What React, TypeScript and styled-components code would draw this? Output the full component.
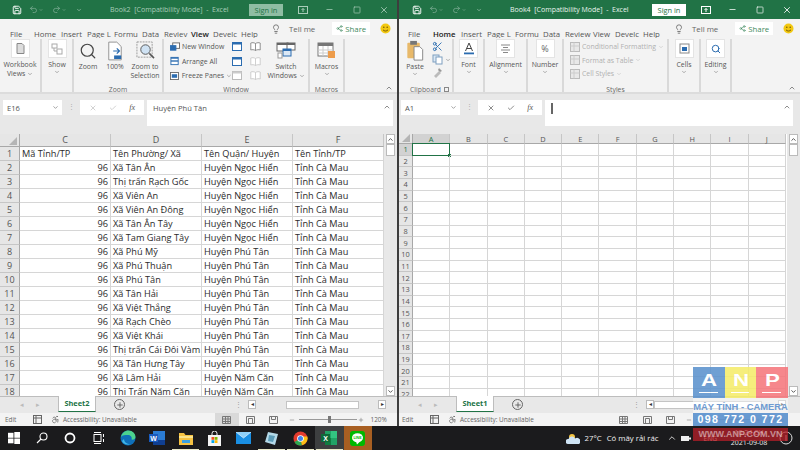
import React from "react";
import styled, { createGlobalStyle } from "styled-components";
import { Accessibility, ChevronDown, ChevronUp, Search, X, Check, Lightbulb, Share2, Scissors, Minus, Plus, Square, Save, Undo2, Redo2 } from "lucide-react";

const GlobalStyle = createGlobalStyle`
  html, body { margin: 0; padding: 0; background: #222; }
  * { box-sizing: border-box; }
  body { font-family: "Open Sans", "Noto Sans", sans-serif; color: #444; }
`;

const Screen = styled.div`
  position: relative;
  width: 800px;
  height: 450px;
  overflow: hidden;
  display: flex;
  flex-direction: column;
`;

const Windows = styled.div`
  height: 426px;
  display: flex;
  gap: 2px;
  background: #3d3d3d;
`;

const ExcelWindow = styled.div<{ $w: number }>`
  width: ${(p) => p.$w}px;
  display: flex;
  flex-direction: column;
  background: #e8e8e8;
  overflow: hidden;
`;

/* title bar */
const TitleBar = styled.div<{ $pad: number }>`
  height: 19px;
  background: #217346;
  display: flex;
  align-items: center;
  padding-left: ${(p) => p.$pad}px;
  color: #fff;
  flex: none;
`;

const Qat = styled.div<{ $w: number }>`
  width: ${(p) => p.$w}px;
  display: flex;
  align-items: center;
  flex: none;
  svg { flex: none; }
`;

const QatGroup = styled.span<{ $ml: number }>`
  display: flex;
  align-items: center;
  gap: 1px;
  margin-left: ${(p) => p.$ml}px;
  color: #7fae95;
`;

const Title = styled.div<{ $dim?: boolean }>`
  font-size: 7px;
  white-space: pre;
  color: ${(p) => (p.$dim ? "#a9cdb9" : "#e9f3ed")};
`;

const SignIn = styled.div<{ $dim?: boolean }>`
  width: 34px;
  height: 12px;
  margin-left: auto;
  background: ${(p) => (p.$dim ? "#8fbda3" : "#ffffff")};
  color: #217346;
  font-size: 7.4px;
  line-height: 12px;
  text-align: center;
`;

const Caption = styled.div<{ $dim?: boolean }>`
  width: 27px;
  height: 19px;
  display: flex;
  align-items: center;
  justify-content: center;
  color: ${(p) => (p.$dim ? "#a9cdb9" : "#ffffff")};
`;

const CaptionRow = styled.div<{ $ml: number }>`
  display: flex;
  margin-left: ${(p) => p.$ml}px;
`;

/* tabs */
const TabRow = styled.div<{ $pad: number }>`
  height: 19px;
  background: #f3f3f3;
  display: flex;
  align-items: center;
  padding-left: ${(p) => p.$pad}px;
  flex: none;
`;

const Tab = styled.div<{ $w: number }>`
  width: ${(p) => p.$w}px;
  flex: none;
  height: 18px;
  white-space: nowrap;
`;

const TabLabel = styled.span<{ $on?: boolean }>`
  position: relative;
  display: inline-block;
  height: 17px;
  font-size: 7.8px;
  line-height: 18px;
  color: ${(p) => (p.$on ? "#222" : "#555")};
  font-weight: ${(p) => (p.$on ? 600 : 400)};
  border-bottom: ${(p) => (p.$on ? "1.5px solid #217346" : "none")};
`;

const TellMe = styled.div<{ $ml: number }>`
  display: flex;
  align-items: center;
  gap: 8px;
  margin-left: ${(p) => p.$ml}px;
  font-size: 7.8px;
  color: #666;
  svg { color: #666; }
`;

const ShareBtn = styled.div`
  width: 38px;
  height: 13px;
  margin-left: 17px;
  background: #fff;
  display: flex;
  align-items: center;
  justify-content: center;
  gap: 2px;
  font-size: 7.8px;
  color: #3f8a60;
`;

const Smiley = styled.svg`
  margin-left: 10px;
  flex: none;
`;

/* ribbon */
const Ribbon = styled.div`
  position: relative;
  height: 56px;
  background: #f3f3f3;
  border-bottom: 2px solid #dcdcdc;
  display: flex;
  padding: 1px 0 0;
  flex: none;
`;

const Group = styled.div<{ $w: number }>`
  width: ${(p) => p.$w}px;
  flex: none;
  display: flex;
  flex-direction: column;
  border-right: 2px solid #d9d9d9;
  height: 53px;
`;

const GroupBody = styled.div<{ $start?: number }>`
  flex: 1;
  display: flex;
  justify-content: ${(p) => (p.$start === undefined ? "center" : "flex-start")};
  padding-left: ${(p) => p.$start ?? 0}px;
  gap: ${(p) => (p.$start === undefined ? 2 : 0)}px;
  min-height: 0;
`;

const GroupName = styled.div`
  position: relative;
  top: 1.5px;
  font-size: 6.8px;
  line-height: 9px;
  text-align: center;
  color: #666;
  height: 9px;
`;

const Launcher = styled.span`
  position: absolute;
  right: 3px;
  top: 2px;
  width: 5px;
  height: 5px;
  border: 1px solid #888;
`;

const Big = styled.div<{ $w: number; $ml?: number }>`
  width: ${(p) => p.$w}px;
  margin-left: ${(p) => p.$ml ?? 0}px;
  flex: none;
  display: flex;
  flex-direction: column;
  align-items: center;
  font-size: 6.9px;
  line-height: 9px;
  text-align: center;
  color: #555;
  white-space: nowrap;
  svg { flex: none; }
`;

const IconBox = styled.div`
  width: 19px;
  height: 19px;
  margin-bottom: 2px;
  background: #fff;
  border: 1px solid #e4e4e4;
  display: flex;
  align-items: center;
  justify-content: center;
  font-size: 9px;
  color: #666;
  flex: none;
`;

const IconSlot = styled.div`
  height: 23px;
  display: flex;
  align-items: center;
  justify-content: center;
  flex: none;
`;

const Caret = styled(ChevronDown)<{ $dim?: boolean }>`
  color: ${(p) => (p.$dim ? "#bbb" : "#666")};
  display: inline-block;
  vertical-align: middle;
`;

const QatCaret = styled(ChevronDown)`
  color: #cfe3d8;
`;

const SmallList = styled.div<{ $gap?: number; $w?: number; $ml?: number }>`
  display: flex;
  flex-direction: column;
  gap: ${(p) => p.$gap ?? 3.5}px;
  padding-top: 2px;
  flex: none;
  width: ${(p) => (p.$w ? `${p.$w}px` : "auto")};
  margin-left: ${(p) => p.$ml ?? 0}px;
`;

const SmallRow = styled.div<{ $dim?: boolean }>`
  display: flex;
  align-items: center;
  gap: 2px;
  font-size: 6.9px;
  line-height: 11px;
  height: 11px;
  white-space: nowrap;
  color: ${(p) => (p.$dim ? "#b0b0b0" : "#555")};
`;

const Collapse = styled(ChevronUp)`
  position: absolute;
  right: 4px;
  bottom: 0;
  color: #555;
`;

/* formula bar */
const FormulaBar = styled.div<{ $l: number; $r: number }>`
  height: 40px;
  padding: 6px ${(p) => p.$r}px 0 ${(p) => p.$l}px;
  display: flex;
  align-items: flex-start;
  background: #e8e8e8;
  flex: none;
`;

const NameBox = styled.div`
  width: 59px;
  height: 15px;
  background: #fff;
  display: flex;
  align-items: center;
  justify-content: space-between;
  padding: 0 3px 0 4px;
  font-size: 7.6px;
  color: #555;
  flex: none;
`;

const Dots = styled.div`
  width: 18px;
  text-align: center;
  font-size: 7px;
  line-height: 14px;
  color: #aaa;
  flex: none;
`;

const FxBox = styled.div<{ $dim?: boolean }>`
  width: 64px;
  height: 15px;
  background: #fff;
  display: flex;
  align-items: center;
  justify-content: space-around;
  padding: 0 3px;
  color: ${(p) => (p.$dim ? "#bbb" : "#555")};
  flex: none;
`;

const Fx = styled.span`
  font-family: "Liberation Serif", serif;
  font-style: italic;
  font-size: 8px;
  color: #555;
`;

const FormulaInput = styled.div`
  flex: 1;
  height: 26px;
  margin-left: 3px;
  background: #fff;
  position: relative;
  padding: 3px 6px;
  font-size: 7.6px;
  color: #555;
`;

const FormulaCaret = styled(ChevronUp)`
  position: absolute;
  right: 2px;
  top: 3px;
  color: #555;
`;

const Cursor = styled.div`
  width: 1.5px;
  height: 11px;
  background: #666;
`;

/* sheet grid */
const SheetArea = styled.div`
  flex: 1;
  min-height: 0;
  display: flex;
  background: #fff;
`;

const Cells = styled.div<{ $cols: string; $rowH: number; $head: number }>`
  flex: 1;
  display: grid;
  grid-template-columns: ${(p) => p.$cols};
  grid-auto-rows: ${(p) => p.$rowH}px;
  grid-template-rows: ${(p) => p.$head}px;
  overflow: hidden;
  align-content: start;
  background: #fff;
`;

const Corner = styled.div`
  background: #e6e6e6;
  border-right: 1px solid #a8a8a8;
  border-bottom: 1px solid #a8a8a8;
  position: relative;
  &::after {
    content: "";
    position: absolute;
    right: 2px;
    bottom: 1px;
    border-style: solid;
    border-width: 0 0 8px 8px;
    border-color: transparent transparent #b5b5b5 transparent;
  }
`;

const ColHead = styled.div<{ $on?: boolean; $size: number }>`
  background: ${(p) => (p.$on ? "#d2d2d2" : "#e6e6e6")};
  border-right: 1px solid #c6c6c6;
  border-bottom: 1px solid ${(p) => (p.$on ? "#217346" : "#a8a8a8")};
  font-size: ${(p) => p.$size}px;
  line-height: 11px;
  text-align: center;
  color: ${(p) => (p.$on ? "#217346" : "#555")};
`;

const RowHead = styled.div<{ $on?: boolean; $size: number }>`
  background: ${(p) => (p.$on ? "#d2d2d2" : "#e6e6e6")};
  border-right: 1px solid ${(p) => (p.$on ? "#217346" : "#a8a8a8")};
  border-bottom: 1px solid #c6c6c6;
  font-size: ${(p) => p.$size}px;
  display: flex;
  align-items: center;
  justify-content: center;
  color: ${(p) => (p.$on ? "#217346" : "#555")};
`;

const Cell = styled.div<{ $num?: boolean; $sel?: boolean }>`
  position: relative;
  border-right: 1px solid #d6d6d6;
  border-bottom: 1px solid #d6d6d6;
  font-size: 9.2px;
  line-height: 13px;
  padding: 0 2px;
  white-space: nowrap;
  overflow: ${(p) => (p.$sel ? "visible" : "hidden")};
  text-align: ${(p) => (p.$num ? "right" : "left")};
  color: #2b2b2b;
`;

const Selection = styled.span`
  position: absolute;
  left: -1px;
  top: -1px;
  right: -1px;
  bottom: -1px;
  border: 1.5px solid #217346;
  &::after {
    content: "";
    position: absolute;
    right: -2px;
    bottom: -2px;
    width: 3px;
    height: 3px;
    background: #217346;
  }
`;

/* scrollbars */
const VScroll = styled.div`
  width: 13px;
  padding: 0 2px;
  background: #e8e8e8;
  display: flex;
  flex-direction: column;
  flex: none;
`;

const ArrowBtn = styled.div`
  height: 10px;
  width: 9px;
  background: #fff;
  border: 1px solid #bbb;
  display: flex;
  align-items: center;
  justify-content: center;
  color: #444;
  flex: none;
`;

const VTrack = styled.div`
  flex: 1;
  background: #e8e8e8;
`;

const VThumb = styled.div`
  width: 9px;
  height: 12px;
  background: #fff;
  border: 1px solid #bbb;
`;

/* sheet tabs row */
const SheetBar = styled.div<{ $pad: number }>`
  height: 17px;
  background: #e8e8e8;
  display: flex;
  align-items: flex-start;
  padding-left: ${(p) => p.$pad}px;
  flex: none;
  font-size: 7.5px;
  border-top: 1px solid #bdbdbd;
`;

const NavArrows = styled.div`
  width: 44px;
  height: 15px;
  display: flex;
  align-items: center;
  justify-content: space-around;
  padding-right: 12px;
  color: #bbb;
  font-size: 7px;
  flex: none;
`;

const SheetTab = styled.div`
  width: 38px;
  height: 16px;
  margin-top: -1px;
  background: #fff;
  border-bottom: 1.5px solid #217346;
  border-left: 1px solid #bdbdbd;
  border-right: 1px solid #bdbdbd;
  color: #217346;
  font-size: 7.4px;
  font-weight: 700;
  text-align: center;
  line-height: 15px;
  flex: none;
`;

const AddSheet = styled.div`
  width: 11px;
  height: 11px;
  margin: 2px 0 0 18px;
  border: 1px solid #666;
  border-radius: 50%;
  color: #555;
  display: flex;
  align-items: center;
  justify-content: center;
  flex: none;
`;

const HScroll = styled.div<{ $w: number }>`
  width: ${(p) => p.$w}px;
  margin-left: 6px;
  height: 9px;
  margin-top: 3px;
  display: flex;
  align-items: center;
  flex: none;
`;

const HThumb = styled.div<{ $w: number; $ml: number }>`
  width: ${(p) => p.$w}px;
  margin-left: ${(p) => p.$ml}px;
  height: 8px;
  background: #fff;
  border: 1px solid #c4c4c4;
  flex: none;
`;

const HFill = styled.div`
  flex: 1;
`;

const ArrowSide = styled.div`
  width: 8px;
  height: 9px;
  background: #fff;
  border: 1px solid #bbb;
  font-size: 6px;
  line-height: 7px;
  text-align: center;
  color: #333;
  flex: none;
`;

const BarDots = styled.div<{ $ml: number }>`
  color: #999;
  font-size: 7px;
  line-height: 15px;
  margin-left: ${(p) => p.$ml}px;
  flex: none;
`;

/* status bar */
const StatusBar = styled.div<{ $pad: number }>`
  flex: none;
  height: 13px;
  background: #f3f3f3;
  display: flex;
  align-items: center;
  padding-left: ${(p) => p.$pad}px;
  font-size: 6.4px;
  color: #666;
  white-space: nowrap;
`;

const StatusMode = styled.span`
  width: 28px;
  flex: none;
`;

const A11y = styled.span`
  display: flex;
  align-items: center;
  gap: 3px;
  margin-left: 9px;
  width: 86px;
  flex: none;
`;

const ViewBtn = styled.div<{ $on?: boolean }>`
  width: 23.5px;
  height: 13px;
  display: flex;
  align-items: center;
  justify-content: center;
  background: ${(p) => (p.$on ? "#d9d9d9" : "transparent")};
  color: #777;
  flex: none;
`;

const ViewGroup = styled.div`
  display: flex;
  margin-left: 78px;
  flex: none;
`;

const ZoomMinus = styled(Minus)`
  margin-left: 3px;
`;

const ZoomSlider = styled.div`
  width: 58px;
  margin: 0 1px 0 4px;
  height: 1px;
  background: #999;
  position: relative;
  flex: none;
`;

const ZoomThumb = styled.span`
  position: absolute;
  left: 29px;
  top: -3px;
  width: 3px;
  height: 7px;
  background: #777;
`;

const ZoomPct = styled.span`
  margin-left: 7px;
`;

/* taskbar */
const Taskbar = styled.div`
  height: 24px;
  background: #1b1b1d;
  display: flex;
  align-items: stretch;
  color: #fff;
  flex: none;
`;

const Slot = styled.div<{ $w?: number; $bg?: string; $run?: boolean }>`
  position: relative;
  width: ${(p) => p.$w ?? 28.7}px;
  flex: none;
  display: flex;
  align-items: center;
  justify-content: center;
  background: ${(p) => p.$bg ?? "transparent"};
  &::after {
    content: "";
    display: ${(p) => (p.$run ? "block" : "none")};
    position: absolute;
    left: 1px;
    right: 1px;
    bottom: 0;
    height: 1.5px;
    background: #e9e9c9;
  }
`;

const Tray = styled.div`
  margin-left: auto;
  display: flex;
  align-items: center;
  font-size: 7.8px;
  color: #f0f0f0;
  padding-right: 7px;
`;

const TrayItem = styled.span<{ $ml: number }>`
  margin-left: ${(p) => p.$ml}px;
  display: flex;
  align-items: center;
  white-space: nowrap;
`;

const Clock = styled.div`
  font-size: 7px;
  line-height: 10px;
  text-align: center;
  width: 44px;
  margin-left: 10px;
  color: #eee;
`;

const Eng = styled.span`
  font-size: 6.6px;
  color: #ddd;
  margin-left: 13px;
`;

/* watermark */
const Watermark = styled.div`
  position: absolute;
  left: 693px;
  top: 367px;
  width: 95px;
  font-family: "Liberation Sans", sans-serif;
  display: flex;
  flex-direction: column;
`;

const Blocks = styled.div`
  display: flex;
  height: 31px;
`;

const Block = styled.div<{ $bg: string }>`
  flex: 1;
  background: ${(p) => p.$bg};
  color: #fff;
  text-align: center;
  position: relative;
  opacity: 0.88;
  &::after {
    content: "";
    position: absolute;
    left: 6px;
    right: 7px;
    bottom: 5px;
    height: 1px;
    background: #fff;
  }
`;

const BlockLetter = styled.span`
  display: inline-block;
  font-weight: 700;
  font-size: 16.5px;
  line-height: 26px;
  transform: scaleX(1.35);
`;

const Tagline = styled.div`
  height: 15px;
  background: rgba(255, 255, 255, 0.45);
  color: #6f9bd1;
  font-size: 9.4px;
  font-weight: 700;
  line-height: 17px;
  text-align: center;
  white-space: nowrap;
`;

const Phone = styled.div`
  height: 13px;
  background: rgba(92, 146, 206, 0.92);
  color: #fff;
  font-size: 10.6px;
  font-weight: 700;
  line-height: 13px;
  letter-spacing: 1.4px;
  text-align: center;
  white-space: nowrap;
`;

const Site = styled.div`
  height: 13px;
  margin-top: 2px;
  background: rgba(190, 30, 40, 0.72);
  color: rgba(255, 255, 255, 0.5);
  font-size: 9px;
  font-weight: 700;
  line-height: 13px;
  text-align: center;
  white-space: nowrap;
`;

const Sheet2Rows: string[][] = [
  ["Xã Tân Ân", "Huyện Ngọc Hiển"],
  ["Thị trấn Rạch Gốc", "Huyện Ngọc Hiển"],
  ["Xã Viên An", "Huyện Ngọc Hiển"],
  ["Xã Viên An Đông", "Huyện Ngọc Hiển"],
  ["Xã Tân Ân Tây", "Huyện Ngọc Hiển"],
  ["Xã Tam Giang Tây", "Huyện Ngọc Hiển"],
  ["Xã Phú Mỹ", "Huyện Phú Tân"],
  ["Xã Phú Thuận", "Huyện Phú Tân"],
  ["Xã Phú Tân", "Huyện Phú Tân"],
  ["Xã Tân Hải", "Huyện Phú Tân"],
  ["Xã Việt Thắng", "Huyện Phú Tân"],
  ["Xã Rạch Chèo", "Huyện Phú Tân"],
  ["Xã Việt Khái", "Huyện Phú Tân"],
  ["Thị trấn Cái Đôi Vàm", "Huyện Phú Tân"],
  ["Xã Tân Hưng Tây", "Huyện Phú Tân"],
  ["Xã Lâm Hải", "Huyện Năm Căn"],
  ["Thị Trấn Năm Căn", "Huyện Năm Căn"],
];

const leftTabs: [string, number][] = [["File", 24], ["Home", 27], ["Insert", 26], ["Page L", 27], ["Formu", 28], ["Data", 22], ["Reviev", 27], ["View", 22], ["Develc", 28], ["Help", 22]];
const rightTabs: [string, number][] = [["File", 25], ["Home", 28], ["Insert", 26], ["Page L", 28], ["Formu", 28], ["Data", 22], ["Review", 28], ["View", 22], ["Develc", 28], ["Help", 22]];

function TitleControls({ dim, name, pad, ml }: { dim?: boolean; name: string; pad: number; ml: number }) {
  return (
    <TitleBar $pad={pad}>
      <Qat $w={98}>
        <Save size={10} strokeWidth={2.2} color="#fff" />
        <QatGroup $ml={7}><Undo2 size={9} /><QatCaret size={4} /></QatGroup>
        <QatGroup $ml={9}><Redo2 size={9} /><QatCaret size={4} /></QatGroup>
        <QatGroup $ml={10}><QatCaret size={6} /></QatGroup>
      </Qat>
      <Title $dim={dim}>{name}  [Compatibility Mode]  -  Excel</Title>
      <SignIn $dim={dim}>Sign in</SignIn>
      <CaptionRow $ml={ml}>
        <Caption $dim={dim}>
          <svg width="10" height="8" viewBox="0 0 10 8" fill="none" stroke="currentColor"><rect x="0.5" y="0.5" width="9" height="7" /><path d="M5 6V2.5M3.5 4L5 2.5 6.5 4" /></svg>
        </Caption>
        <Caption $dim={dim}><Minus size={9} /></Caption>
        <Caption $dim={dim}><Square size={8} /></Caption>
        <Caption $dim={dim}><X size={10} /></Caption>
      </CaptionRow>
    </TitleBar>
  );
}

function Tabs({ active, pad, tabs, bulb }: { active: string; pad: number; tabs: [string, number][]; bulb: number }) {
  return (
    <TabRow $pad={pad}>
      {tabs.map(([t, w]) => (
        <Tab key={t} $w={w}><TabLabel $on={t === active}>{t}</TabLabel></Tab>
      ))}
      <TellMe $ml={bulb}>
        <Lightbulb size={10} />
        Tell me
      </TellMe>
      <ShareBtn>
        <Share2 size={7} />
        Share
      </ShareBtn>
      <Smiley width="11" height="11" viewBox="0 0 11 11">
        <circle cx="5.5" cy="5.5" r="5" fill="#f2c811" />
        <circle cx="3.8" cy="4.2" r="0.8" fill="#7a5c00" />
        <circle cx="7.2" cy="4.2" r="0.8" fill="#7a5c00" />
        <path d="M3 6.8c1.2 1.6 3.8 1.6 5 0" stroke="#7a5c00" fill="none" />
      </Smiley>
    </TabRow>
  );
}

function MiniWin({ dim }: { dim?: boolean }) {
  const fill = "#2b6cb0";
  return (
    <svg width="10" height="11" viewBox="0 0 10 11">
      <rect x="0.5" y="1.5" width="9" height="8" fill="#fff" stroke={dim ? "#bbb" : fill} />
      <rect x="0.5" y="1.5" width="9" height="2" fill={dim ? "#ccc" : fill} />
    </svg>
  );
}

function BookIcon({ dim }: { dim?: boolean }) {
  const c = dim ? "#c4c4c4" : "#777";
  return (
    <svg width="11" height="11" viewBox="0 0 11 10">
      <path d="M5.5 2C4 1 2 1 0.8 1.5v7C2 8 4 8 5.5 9c1.5-1 3.5-1 4.7-0.5v-7C9 1 7 1 5.5 2zM5.5 2v7" fill="#fff" stroke={c} strokeWidth="0.8" />
    </svg>
  );
}

function ViewRibbon() {
  return (
    <Ribbon>
      <Group $w={42}>
        <GroupBody>
          <Big $w={38}>
            <IconBox>
              <svg width="9" height="11" viewBox="0 0 9 11"><path d="M1 0.5h5l2 2v8H1z" fill="#ddd" stroke="#888" /></svg>
            </IconBox>
            Workbook
            <span>Views <Caret size={6} /></span>
          </Big>
        </GroupBody>
        <GroupName />
      </Group>
      <Group $w={32}>
        <GroupBody>
          <Big $w={28}>
            <IconBox>
              <svg width="12" height="12" viewBox="0 0 12 12" fill="#fff" stroke="#aaa"><rect x="1" y="1" width="5" height="4" /><rect x="6" y="6" width="5" height="5" /><path d="M3 5v3h3" fill="none" /></svg>
            </IconBox>
            Show
            <Caret size={6} />
          </Big>
        </GroupBody>
        <GroupName />
      </Group>
      <Group $w={90}>
        <GroupBody>
          <Big $w={26}>
            <IconSlot><Search size={18} strokeWidth={1.6} color="#444" /></IconSlot>
            Zoom
          </Big>
          <Big $w={24}>
            <IconSlot>
              <svg width="16" height="20" viewBox="0 0 18 22">
                <path d="M2 1h9l5 5v15H2z" fill="#fff" stroke="#888" />
                <path d="M7 11h7M11 8l3 3-3 3" stroke="#2b6cb0" fill="none" strokeWidth="1.4" />
                <rect x="8" y="16" width="8" height="4" fill="#2b6cb0" />
              </svg>
            </IconSlot>
            100%
          </Big>
          <Big $w={32}>
            <IconSlot>
              <svg width="19" height="19" viewBox="0 0 20 20">
                <rect x="1" y="1" width="16" height="16" fill="#f3f3f3" stroke="#999" strokeDasharray="2 1" />
                <circle cx="10" cy="9" r="5" fill="#cfe2f3" stroke="#555" />
                <path d="M14 13l5 5" stroke="#555" strokeWidth="1.6" />
              </svg>
            </IconSlot>
            Zoom to
            <br />
            Selection
          </Big>
        </GroupBody>
        <GroupName>Zoom</GroupName>
      </Group>
      <Group $w={146}>
        <GroupBody $start={6}>
          <SmallList $w={62}>
            <SmallRow>
              <svg width="10" height="10" viewBox="0 0 11 10"><rect x="3" y="0.5" width="7.5" height="6" fill="#fff" stroke="#666" /><rect x="0.5" y="3.5" width="6" height="5" fill="#2b6cb0" stroke="#2b6cb0" /></svg>
              New Window
            </SmallRow>
            <SmallRow>
              <svg width="10" height="10" viewBox="0 0 11 10"><rect x="1" y="1" width="8" height="8" fill="#fff" stroke="#2b6cb0" /><path d="M1 5h8" stroke="#2b6cb0" strokeWidth="1.5" /><rect x="1" y="1" width="8" height="1.5" fill="#2b6cb0" /></svg>
              Arrange All
            </SmallRow>
            <SmallRow>
              <svg width="10" height="10" viewBox="0 0 11 10"><rect x="0.5" y="1" width="9" height="8" fill="#fff" stroke="#666" /><rect x="2" y="3" width="6" height="4" fill="#2b6cb0" /></svg>
              Freeze Panes <Caret size={6} />
            </SmallRow>
          </SmallList>
          <SmallList $gap={3.5}>
            <MiniWin />
            <MiniWin />
            <MiniWin dim />
          </SmallList>
          <SmallList $gap={3.5} $ml={8}>
            <BookIcon />
            <BookIcon dim />
            <BookIcon dim />
          </SmallList>
          <Big $w={36} $ml={7}>
            <IconSlot>
              <svg width="20" height="18" viewBox="0 0 20 18">
                <rect x="1" y="1" width="11" height="8" fill="#fff" stroke="#666" /><rect x="1" y="1" width="11" height="2" fill="#666" />
                <rect x="11" y="1" width="8" height="7" fill="#fff" stroke="#666" /><rect x="11" y="1" width="8" height="2" fill="#666" />
                <rect x="7" y="7" width="8" height="7" fill="#dbe8f5" stroke="#2b6cb0" /><rect x="7" y="7" width="8" height="2" fill="#2b6cb0" />
                <rect x="2" y="11" width="4" height="5" fill="#fff" stroke="#999" />
              </svg>
            </IconSlot>
            Switch
            <span>Windows <Caret size={6} /></span>
          </Big>
        </GroupBody>
        <GroupName>Window</GroupName>
      </Group>
      <Group $w={35}>
        <GroupBody>
          <Big $w={30}>
            <IconSlot>
              <svg width="20" height="18" viewBox="0 0 20 18">
                <rect x="1" y="1" width="15" height="13" fill="#fff" stroke="#777" />
                <rect x="1" y="1" width="15" height="3" fill="#777" />
                <path d="M1 8h15M1 11h15M6 4v10M11 4v10" stroke="#ccc" />
                <rect x="11" y="9" width="7" height="7" fill="#ed9c4b" />
              </svg>
            </IconSlot>
            Macros
            <Caret size={6} />
          </Big>
        </GroupBody>
        <GroupName>Macros</GroupName>
      </Group>
      <Collapse size={8} />
    </Ribbon>
  );
}

function HomeRibbon() {
  return (
    <Ribbon>
      <Group $w={55}>
        <GroupBody>
          <Big $w={30}>
            <IconSlot>
              <svg width="18" height="23" viewBox="0 0 18 24">
                <rect x="1" y="4" width="13" height="16" rx="1" fill="#e8b96a" />
                <rect x="4" y="2" width="7" height="4" fill="#777" />
                <path d="M8 8h6l3 3v11H8z" fill="#fff" stroke="#888" />
              </svg>
            </IconSlot>
            Paste
            <Caret size={6} />
          </Big>
          <SmallList $gap={2}>
            <Scissors size={11} color="#2b6cb0" />
            <SmallRow>
              <svg width="11" height="11" viewBox="0 0 11 11"><rect x="1" y="1" width="6" height="7" fill="#dbe8f5" stroke="#7f9fc0" /><rect x="4" y="3" width="6" height="7" fill="#fff" stroke="#7f9fc0" /></svg>
              <Caret size={6} />
            </SmallRow>
            <svg width="11" height="11" viewBox="0 0 11 11"><path d="M2 9l5-5 2 2-5 5z" fill="#bbb" /><path d="M7 1l3 3-2 1-2-2z" fill="#999" /></svg>
          </SmallList>
        </GroupBody>
        <GroupName>Clipboard<Launcher /></GroupName>
      </Group>
      <Group $w={31}>
        <GroupBody>
          <Big $w={28}>
            <IconBox>
              <svg width="12" height="13" viewBox="0 0 12 13"><path d="M2.5 9L6 1l3.5 8M4 6.5h4" stroke="#444" fill="none" /><rect x="1" y="10.5" width="10" height="1.8" fill="#2b6cb0" /></svg>
            </IconBox>
            Font
            <Caret size={6} />
          </Big>
        </GroupBody>
        <GroupName />
      </Group>
      <Group $w={43}>
        <GroupBody>
          <Big $w={40}>
            <IconBox>
              <svg width="11" height="9" viewBox="0 0 11 9" stroke="#888"><path d="M1 1h9M3 3.5h5M1 6h9M3 8.5h5" /></svg>
            </IconBox>
            Alignment
            <Caret size={6} />
          </Big>
        </GroupBody>
        <GroupName />
      </Group>
      <Group $w={36}>
        <GroupBody>
          <Big $w={32}>
            <IconBox>%</IconBox>
            Number
            <Caret size={6} />
          </Big>
        </GroupBody>
        <GroupName />
      </Group>
      <Group $w={105}>
        <GroupBody $start={6}>
          <SmallList $gap={2.5}>
            {["Conditional Formatting", "Format as Table", "Cell Styles"].map((s) => (
              <SmallRow key={s} $dim>
                <svg width="10" height="10" viewBox="0 0 10 10"><rect x="0.5" y="0.5" width="9" height="9" fill="#e8e8e8" stroke="#bbb" /><path d="M0.5 4h9M4 0.5v9" stroke="#ccc" /></svg>
                {s} <Caret size={6} $dim />
              </SmallRow>
            ))}
          </SmallList>
        </GroupBody>
        <GroupName>Styles</GroupName>
      </Group>
      <Group $w={32}>
        <GroupBody>
          <Big $w={28}>
            <IconBox>
              <svg width="11" height="11" viewBox="0 0 11 11"><rect x="1" y="1" width="9" height="9" fill="#fff" stroke="#888" /><rect x="3" y="4" width="5" height="4" fill="#2b6cb0" /></svg>
            </IconBox>
            Cells
            <Caret size={6} />
          </Big>
        </GroupBody>
        <GroupName />
      </Group>
      <Group $w={31}>
        <GroupBody>
          <Big $w={28}>
            <IconBox><Search size={10} strokeWidth={2.4} color="#2b6cb0" /></IconBox>
            Editing
            <Caret size={6} />
          </Big>
        </GroupBody>
        <GroupName />
      </Group>
      <Collapse size={8} />
    </Ribbon>
  );
}

function Formula({ name, dim, l, r, children }: { name: string; dim?: boolean; l: number; r: number; children?: React.ReactNode }) {
  return (
    <FormulaBar $l={l} $r={r}>
      <NameBox>{name}<Caret size={7} /></NameBox>
      <Dots>⋮</Dots>
      <FxBox $dim={dim}>
        <X size={8} />
        <Check size={8} />
        <Fx>fx</Fx>
      </FxBox>
      <FormulaInput>
        {children}
        <FormulaCaret size={8} />
      </FormulaInput>
    </FormulaBar>
  );
}

function VerticalBar() {
  return (
    <VScroll>
      <ArrowBtn><ChevronUp size={7} strokeWidth={3} /></ArrowBtn>
      <VThumb />
      <VTrack />
      <ArrowBtn><ChevronDown size={7} strokeWidth={3} /></ArrowBtn>
    </VScroll>
  );
}

function BottomBars({ tab, pad, statusPad, dotsMl, scrollW, thumbMl, thumbW, active }: {
  tab: string; pad: number; statusPad: number; dotsMl: number; scrollW: number; thumbMl: number; thumbW: number; active?: boolean;
}) {
  return (
    <>
      <SheetBar $pad={pad}>
        <NavArrows><span>◂</span><span>▸</span></NavArrows>
        <SheetTab>{tab}</SheetTab>
        <AddSheet><Plus size={8} strokeWidth={2.5} /></AddSheet>
        <BarDots $ml={dotsMl}>⋮</BarDots>
        <HScroll $w={scrollW}>
          <ArrowSide>◂</ArrowSide>
          <HThumb $ml={thumbMl} $w={thumbW} />
          <HFill />
          <ArrowSide>▸</ArrowSide>
        </HScroll>
      </SheetBar>
      <StatusBar $pad={statusPad}>
        <StatusMode>Edit</StatusMode>
        <svg width="9" height="9" viewBox="0 0 9 9" fill="none" stroke="#666"><rect x="0.5" y="0.5" width="8" height="8" /><path d="M0.5 3h8M3 0.5v8" /></svg>
        <A11y>
          <Accessibility size={9} />
          Accessibility: Unavailable
        </A11y>
        <ViewGroup>
          <ViewBtn $on={active}>
            <svg width="9" height="8" viewBox="0 0 9 8" fill="none" stroke="currentColor"><path d="M0.5 0.5h8v7h-8zM0.5 3h8M0.5 5.5h8M3.5 0.5v7M6 0.5v7" /></svg>
          </ViewBtn>
          <ViewBtn>
            <svg width="9" height="8" viewBox="0 0 9 8" fill="none" stroke="currentColor"><path d="M0.5 0.5h8v7h-8zM2.5 2.5h4v5h-4z" /></svg>
          </ViewBtn>
          <ViewBtn>
            <svg width="9" height="8" viewBox="0 0 9 8" fill="none" stroke="currentColor"><path d="M0.5 0.5h8v7h-8zM2.5 0.5v3h4v-3" /></svg>
          </ViewBtn>
        </ViewGroup>
        <ZoomMinus size={6} />
        <ZoomSlider><ZoomThumb /></ZoomSlider>
        <Plus size={6} />
        <ZoomPct>120%</ZoomPct>
      </StatusBar>
    </>
  );
}

function LeftWindow() {
  return (
    <ExcelWindow $w={397}>
      <TitleControls dim name="Book2" pad={12} ml={6} />
      <Tabs active="View" pad={10} tabs={leftTabs} bulb={8} />
      <ViewRibbon />
      <Formula name="E16" dim l={3} r={4}>Huyện Phú Tân</Formula>
      <SheetArea>
        <Cells $cols="20px repeat(4, 91px)" $rowH={14} $head={13}>
          <Corner />
          {["C", "D", "E", "F"].map((c) => <ColHead key={c} $size={9}>{c}</ColHead>)}
          <RowHead $size={9}>1</RowHead>
          <Cell>Mã Tỉnh/TP</Cell>
          <Cell>Tên Phường/ Xã</Cell>
          <Cell>Tên Quận/ Huyện</Cell>
          <Cell>Tên Tỉnh/TP</Cell>
          {Sheet2Rows.map((r, i) => (
            <React.Fragment key={i}>
              <RowHead $size={9}>{i + 2}</RowHead>
              <Cell $num>96</Cell>
              <Cell>{r[0]}</Cell>
              <Cell>{r[1]}</Cell>
              <Cell>Tỉnh Cà Mau</Cell>
            </React.Fragment>
          ))}
        </Cells>
        <VerticalBar />
      </SheetArea>
      <BottomBars tab="Sheet2" pad={14} statusPad={5} dotsMl={110} scrollW={138} thumbMl={30} thumbW={73} active />
    </ExcelWindow>
  );
}

function RightWindow() {
  const cols = ["A", "B", "C", "D", "E", "F", "G", "H", "I", "J"];
  return (
    <ExcelWindow $w={401}>
      <TitleControls name="Book4" pad={13} ml={6} />
      <Tabs active="Home" pad={9} tabs={rightTabs} bulb={9} />
      <HomeRibbon />
      <Formula name="A1" l={2} r={7}><Cursor /></Formula>
      <SheetArea>
        <Cells $cols="14px repeat(10, 37.3px)" $rowH={11.67} $head={10}>
          <Corner />
          {cols.map((c) => <ColHead key={c} $on={c === "A"} $size={7.4}>{c}</ColHead>)}
          {Array.from({ length: 22 }, (_, r) => (
            <React.Fragment key={r}>
              <RowHead $on={r === 0} $size={7.4}>{r + 1}</RowHead>
              {cols.map((c, i) => (
                <Cell key={c} $sel={r === 0 && i === 0}>{r === 0 && i === 0 && <Selection />}</Cell>
              ))}
            </React.Fragment>
          ))}
        </Cells>
        <VerticalBar />
      </SheetArea>
      <BottomBars tab="Sheet1" pad={13} statusPad={3} dotsMl={110} scrollW={140} thumbMl={0} thumbW={108} />
    </ExcelWindow>
  );
}

function TaskIcons() {
  return (
    <>
      <Slot $w={28}>
        <svg width="12" height="12" viewBox="0 0 12 12" fill="#fff"><rect x="0" y="0.8" width="5.5" height="5" /><rect x="6.3" y="0" width="5.7" height="5.8" /><rect x="0" y="6.5" width="5.5" height="4.8" /><rect x="6.3" y="6.5" width="5.7" height="5.5" /></svg>
      </Slot>
      <Slot $w={28}>
        <svg width="12" height="12" viewBox="0 0 12 12" fill="none" stroke="#fff" strokeWidth="1.1"><circle cx="7.5" cy="4.5" r="3.5" /><path d="M5 7l-4 4" /></svg>
      </Slot>
      <Slot $w={28}>
        <svg width="12" height="12" viewBox="0 0 12 12" fill="none" stroke="#fff" strokeWidth="1.8"><circle cx="6" cy="6" r="4.5" /></svg>
      </Slot>
      <Slot $w={30}>
        <svg width="13" height="12" viewBox="0 0 13 12" fill="none" stroke="#fff"><rect x="1" y="2.5" width="7" height="7" /><path d="M1 0.5h7M1 11.5h7M10.5 2v3M10.5 7v3" /></svg>
      </Slot>
      <Slot>
        <svg width="16" height="16" viewBox="0 0 16 16">
          <circle cx="8" cy="8" r="7.5" fill="#0f6fb8" />
          <path d="M1 7c1-4 4-6.5 7.5-6.5 4 0 7 3 7 6.5 0 2-2 3-4 2.5 0.8-2-0.5-4.5-3.5-4.5C5 5 2.5 5 1 7z" fill="#4cd28d" />
          <path d="M4 9c0 3 3 5 6 5-3 1.5-7 0-8-3z" fill="#40b7e6" />
        </svg>
      </Slot>
      <Slot>
        <svg width="16" height="14" viewBox="0 0 16 14">
          <rect x="4" y="0" width="12" height="14" fill="#2b7cd3" />
          <rect x="4" y="9" width="12" height="5" fill="#103f91" />
          <rect x="0" y="3" width="9" height="8" fill="#185abd" />
          <text x="4.5" y="9.5" fontSize="7" fontWeight="700" fill="#fff" textAnchor="middle" fontFamily="Liberation Sans">W</text>
        </svg>
      </Slot>
      <Slot $run>
        <svg width="14" height="13" viewBox="0 0 14 13">
          <path d="M0 1h5l1.5 2H14v10H0z" fill="#f5c242" />
          <rect x="0" y="4" width="14" height="2" fill="#fbe38c" />
          <rect x="3" y="8" width="8" height="3" fill="#3aa0e0" />
        </svg>
      </Slot>
      <Slot>
        <svg width="15" height="15" viewBox="0 0 15 15">
          <path d="M1 4h13v11H1z" fill="#f4f4f4" />
          <path d="M5 4V2.5a2.5 2.5 0 0 1 5 0V4" fill="none" stroke="#f4f4f4" />
          <rect x="4.5" y="6" width="2.8" height="2.8" fill="#f25022" /><rect x="7.7" y="6" width="2.8" height="2.8" fill="#7fba00" />
          <rect x="4.5" y="9.2" width="2.8" height="2.8" fill="#00a4ef" /><rect x="7.7" y="9.2" width="2.8" height="2.8" fill="#ffb900" />
        </svg>
      </Slot>
      <Slot>
        <svg width="15" height="12" viewBox="0 0 15 12">
          <rect x="0" y="0" width="15" height="12" fill="#1a8fe3" />
          <path d="M0 0l7.5 6L15 0" fill="#8fd0f8" stroke="#fff" strokeWidth="0.6" />
        </svg>
      </Slot>
      <Slot $run>
        <svg width="15" height="15" viewBox="0 0 15 15">
          <path d="M4 1l10 2-3 11-10-3z" fill="#b4d9e8" />
          <path d="M5 4l6 1-2 6-5-1z" fill="#5b9cb8" />
        </svg>
      </Slot>
      <Slot $run>
        <svg width="15" height="15" viewBox="0 0 15 15">
          <circle cx="7.5" cy="7.5" r="7" fill="#e33b2e" />
          <path d="M7.5 7.5L1.5 11A7 7 0 0 0 9 14.3z" fill="#2da94f" />
          <path d="M7.5 7.5L9 14.3A7 7 0 0 0 14.3 5.5H7.5z" fill="#fbc116" />
          <circle cx="7.5" cy="7.5" r="3.3" fill="#fff" />
          <circle cx="7.5" cy="7.5" r="2.5" fill="#3f83ed" />
        </svg>
      </Slot>
      <Slot $run $bg="#3d3f40">
        <svg width="16" height="14" viewBox="0 0 16 14">
          <rect x="4" y="0" width="12" height="14" fill="#21a366" />
          <rect x="10" y="0" width="6" height="7" fill="#33c481" />
          <rect x="4" y="7" width="6" height="7" fill="#107c41" />
          <rect x="0" y="3" width="9" height="8" fill="#0e6b3a" />
          <text x="4.5" y="9.5" fontSize="7" fontWeight="700" fill="#fff" textAnchor="middle" fontFamily="Liberation Sans">X</text>
        </svg>
      </Slot>
      <Slot $bg="#a85f22">
        <svg width="15" height="15" viewBox="0 0 15 15">
          <rect width="15" height="15" rx="3" fill="#00b900" />
          <ellipse cx="7.5" cy="6.8" rx="5.5" ry="4.5" fill="#fff" />
          <path d="M6 10.5l1 3 3-3z" fill="#fff" />
          <text x="7.5" y="8.3" fontSize="3.6" fontWeight="700" fill="#00b900" textAnchor="middle" fontFamily="Liberation Sans">LINE</text>
        </svg>
      </Slot>
    </>
  );
}

export default function App() {
  return (
    <Screen>
      <GlobalStyle />
      <Windows>
        <LeftWindow />
        <RightWindow />
      </Windows>
      <Taskbar>
        <TaskIcons />
        <Tray>
          <svg width="14" height="13" viewBox="0 0 14 13">
            <circle cx="6" cy="5" r="3" fill="#f5c542" />
            <path d="M2 12a2.5 2.5 0 0 1 0.5-5 3.5 3.5 0 0 1 6.5-0.5A2.8 2.8 0 0 1 13 12z" fill="#cfe4f5" />
          </svg>
          <TrayItem $ml={5}>27°C</TrayItem>
          <TrayItem $ml={5}>Có mây rải rác</TrayItem>
          <TrayItem $ml={8}><ChevronUp size={10} /></TrayItem>
          <TrayItem $ml={4}>
            <svg width="10" height="7" viewBox="0 0 10 7" fill="#eee"><rect x="0" y="1" width="8" height="5" /><rect x="8" y="2.5" width="2" height="2" /></svg>
          </TrayItem>
          <Eng>ENG</Eng>
          <Clock>
            10:24 CH
            <br />
            2021-09-08
          </Clock>
          <TrayItem $ml={8}>
            <svg width="14" height="14" viewBox="0 0 14 14" fill="none" stroke="#ddd"><circle cx="7" cy="7" r="6" /><path d="M7 4v6" /></svg>
          </TrayItem>
        </Tray>
      </Taskbar>
      <Watermark>
        <Blocks>
          <Block $bg="#5c92ce"><BlockLetter>A</BlockLetter></Block>
          <Block $bg="#f5ec6a"><BlockLetter>N</BlockLetter></Block>
          <Block $bg="#f5777d"><BlockLetter>P</BlockLetter></Block>
        </Blocks>
        <Tagline>MÁY TÍNH - CAMERA</Tagline>
        <Phone>098 772 0 772</Phone>
        <Site>WWW.ANP.COM.VN</Site>
      </Watermark>
    </Screen>
  );
}
